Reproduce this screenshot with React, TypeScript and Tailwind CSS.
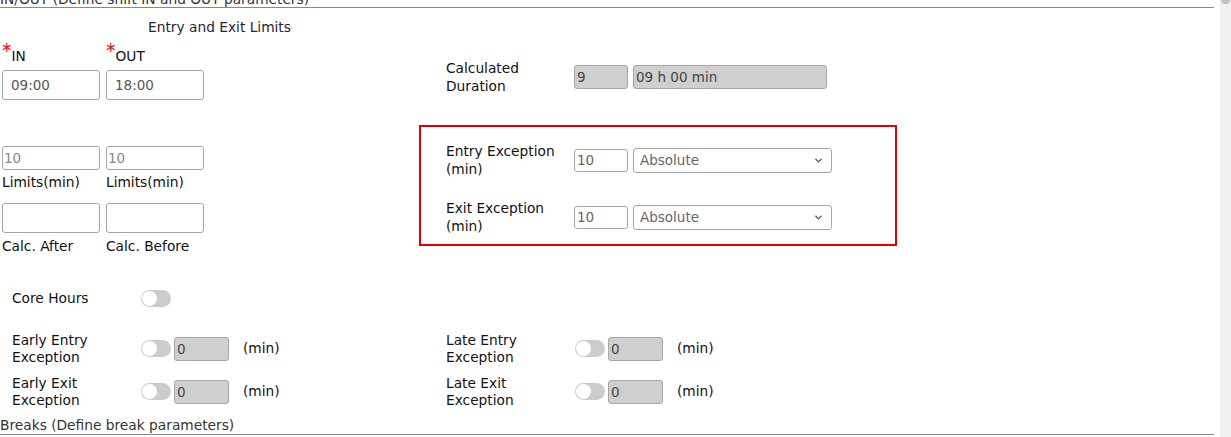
import { ChevronDown } from 'lucide-react'

const font = { fontFamily: '"DejaVu Sans", "Open Sans", sans-serif' }

function TextBox({ value, className = '' }: { value?: string; className?: string }) {
  return (
    <input
      readOnly
      value={value ?? ''}
      className={`block rounded-[3px] border border-[#a6a6a6] bg-white text-[13.5px] text-[#555] outline-none ${className}`}
    />
  )
}

function Toggle() {
  return (
    <span className="flex h-[17px] w-[30px] items-center rounded-full bg-[#cccccc] pl-[1px]">
      <span className="h-[15px] w-[15px] rounded-full bg-white" />
    </span>
  )
}

function AbsoluteSelect() {
  return (
    <div className="flex h-[25px] w-[199px] items-center justify-between rounded-[3px] border border-[#a6a6a6] bg-white pl-[6px] pr-[7px] text-[13.5px] text-[#666]">
      <span>Absolute</span>
      <ChevronDown size={11} strokeWidth={3} className="text-[#555]" />
    </div>
  )
}

function ExceptionToggleRow({ label }: { label: [string, string] }) {
  return (
    <div className="flex h-[43px] items-center">
      <div className="w-[129px] text-[13.75px] leading-[17px] text-[#111]">
        {label[0]}
        <br />
        {label[1]}
      </div>
      <Toggle />
      <TextBox value="0" className="ml-[3px] h-[24px] w-[55px] !bg-[#cfcfcf] pl-[2px] !text-[#444]" />
      <span className="ml-[14px] text-[13.75px] text-[#111]">(min)</span>
    </div>
  )
}

export default function App() {
  return (
    <div style={font} className="flex h-[437px] w-full overflow-hidden bg-white text-[13.75px]">
      <div className="w-[1214px] shrink-0">
        {/* IN/OUT section header, scrolled partly out of view */}
        <div className="-mt-[9px] border-b border-[#888] leading-[16px] text-[#333]">
          IN/OUT (Define shift IN and OUT parameters)
        </div>

        <div className="flex">
          {/* entry / exit limits */}
          <div className="w-[419px] shrink-0">
            <div className="mt-[10px] w-[439px] text-center leading-[18px] text-[#2b2230]">
              Entry and Exit Limits
            </div>
            <div className="flex h-[34px] items-end gap-[6px] pl-[2px] pb-[3px]">
              <div className="flex w-[98px] items-start text-[#111]">
                <span className="-mt-[5px] text-[19px] leading-[18px] text-red-600">*</span>
                <span>IN</span>
              </div>
              <div className="flex w-[98px] items-start text-[#111]">
                <span className="-mt-[5px] text-[19px] leading-[18px] text-red-600">*</span>
                <span>OUT</span>
              </div>
            </div>
            <div className="flex gap-[6px] pl-[2px]">
              <TextBox value="09:00" className="h-[30px] w-[98px] pl-[8px]" />
              <TextBox value="18:00" className="h-[30px] w-[98px] pl-[8px]" />
            </div>

            <div className="mt-[46px] flex gap-[6px] pl-[2px]">
              <TextBox value="10" className="h-[24px] w-[98px] pl-[1px] !text-[#888]" />
              <TextBox value="10" className="h-[24px] w-[98px] pl-[1px] !text-[#888]" />
            </div>
            <div className="flex h-[25px] items-center gap-[6px] pl-[2px] text-[#111]">
              <span className="w-[98px]">Limits(min)</span>
              <span className="w-[98px]">Limits(min)</span>
            </div>
            <div className="mt-[8px] flex gap-[6px] pl-[2px]">
              <TextBox className="h-[30px] w-[98px]" />
              <TextBox className="h-[30px] w-[98px]" />
            </div>
            <div className="flex h-[26px] items-center gap-[6px] pl-[2px] text-[#111]">
              <span className="w-[98px]">Calc. After</span>
              <span className="w-[98px]">Calc. Before</span>
            </div>
          </div>

          {/* calculated duration and exceptions */}
          <div className="w-[478px] shrink-0">
            <div className="mt-[51px] flex items-center pl-[27px]">
              <div className="w-[128px] leading-[18px] text-[#111]">
                Calculated
                <br />
                Duration
              </div>
              <TextBox value="9" className="h-[24px] w-[54px] !bg-[#cfcfcf] pl-[2px] !text-[#444]" />
              <TextBox value="09 h 00 min" className="ml-[5px] h-[24px] w-[194px] !bg-[#cfcfcf] pl-[2px] !text-[#444]" />
            </div>

            <div className="mt-[30px] h-[121px] border-2 border-[#e00000] pl-[25px] pt-[15px]">
              <div className="flex items-center">
                <div className="w-[128px] leading-[18px] text-[#111]">
                  Entry Exception
                  <br />
                  (min)
                </div>
                <TextBox value="10" className="h-[23px] w-[54px] pl-[2px] !text-[#666]" />
                <div className="ml-[5px]">
                  <AbsoluteSelect />
                </div>
              </div>
              <div className="mt-[21px] flex items-center">
                <div className="w-[128px] leading-[18px] text-[#111]">
                  Exit Exception
                  <br />
                  (min)
                </div>
                <TextBox value="10" className="h-[23px] w-[54px] pl-[2px] !text-[#666]" />
                <div className="ml-[5px]">
                  <AbsoluteSelect />
                </div>
              </div>
            </div>
          </div>
        </div>

        {/* core hours and early / late exceptions */}
        <div className="mt-[31px] flex h-[17px] items-center pl-[12px]">
          <span className="w-[129px] text-[#111]">Core Hours</span>
          <Toggle />
        </div>
        <div className="mt-[20px] flex">
          <div className="w-[434px] shrink-0 pl-[12px]">
            <ExceptionToggleRow label={['Early Entry', 'Exception']} />
            <ExceptionToggleRow label={['Early Exit', 'Exception']} />
          </div>
          <div className="pl-[12px]">
            <ExceptionToggleRow label={['Late Entry', 'Exception']} />
            <ExceptionToggleRow label={['Late Exit', 'Exception']} />
          </div>
        </div>

        <div className="mt-[3px] border-b border-[#888] leading-[18px] text-[#333]">
          Breaks (Define break parameters)
        </div>
      </div>

      {/* scrollbar track */}
      <div className="ml-[6px] flex-1 bg-[#f1f1f1]">
        <div className="mx-auto h-[4px] w-[9px] rounded-b-full bg-[#c1c1c1]" />
      </div>
    </div>
  )
}
